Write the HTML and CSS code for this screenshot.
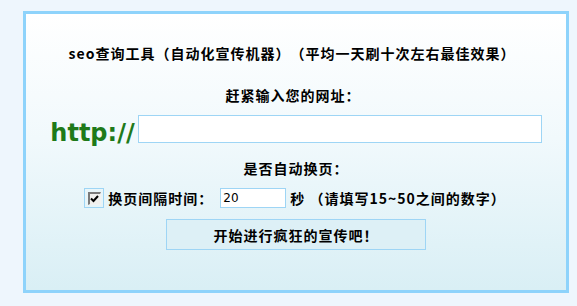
FILE: index.html
```html
<!DOCTYPE html>
<html lang="zh-CN">
<head>
<meta charset="utf-8">
<title>seo查询工具</title>
<link rel="stylesheet" href="styles.css">
</head>
<body>
<div class="panel">
  <div class="title">seo查询工具（自动化宣传机器）（平均一天刷十次左右最佳效果）</div>
  <div class="label label-url">赶紧输入您的网址：</div>
  <div class="url-row">
    <span class="proto">http://</span>
    <input class="url-input" type="text" value="">
  </div>
  <div class="label label-auto">是否自动换页：</div>
  <div class="opt-row">
    <span class="chk-wrap"><span class="chk"><svg width="9" height="8" viewBox="0 0 9 8"><path d="M1 3.5 L3.5 6 L8 1" fill="none" stroke="#000" stroke-width="2"/></svg></span></span>
    <span class="opt-text">换页间隔时间：</span>
    <input class="sec-input" type="text" value="20">
    <span class="opt-text sec">秒 （请填写15~50之间的数字）</span>
  </div>
  <div class="btn">开始进行疯狂的宣传吧！</div>
</div>
</body>
</html>
```

FILE: styles.css
```css
html, body {
  margin: 0;
  padding: 0;
}
body {
  background: #eef6fd;
  width: 577px;
  height: 306px;
  font-family: "Noto Sans CJK SC", "DejaVu Sans", sans-serif;
  color: #000;
}
.panel {
  box-sizing: border-box;
  margin: 11px 0 0 23px;
  width: 546px;
  height: 282px;
  border: 3px solid #8ed3fb;
  background: linear-gradient(#ffffff 0%, #f1f9fc 45%, #d9eff5 100%);
  display: flex;
  flex-direction: column;
  align-items: center;
  padding-top: 29px;
}
.title, .label, .opt-text, .btn {
  font-size: 14px;
  font-weight: bold;
  letter-spacing: 1px;
  line-height: 20px;
  white-space: pre;
  text-spacing-trim: space-all;
}
.title {
  margin-left: -8px;
}
.label-url {
  margin-top: 22px;
  margin-left: -6px;
}
.url-row {
  margin-top: 10px;
  display: flex;
  align-items: flex-end;
  height: 28px;
}
.proto {
  font-family: "DejaVu Sans", sans-serif;
  font-weight: bold;
  font-size: 24px;
  line-height: 28px;
  color: #1e7a1a;
  margin-right: 3px;
  position: relative;
  top: 4px;
}
.url-input {
  box-sizing: border-box;
  width: 404px;
  height: 28px;
  border: 1px solid #9ed5f5;
  background: #fff;
  margin: 0;
  padding: 0 3px;
  outline: none;
}
.label-auto {
  margin-top: 15px;
}
.opt-row {
  margin-top: 10px;
  display: flex;
  align-items: center;
  height: 20px;
  margin-left: -2px;
}
.chk-wrap {
  box-sizing: border-box;
  width: 20px;
  height: 20px;
  border: 1px solid #9ed5f5;
  display: flex;
  align-items: center;
  justify-content: center;
  margin-right: 4px;
}
.chk {
  box-sizing: border-box;
  width: 13px;
  height: 13px;
  border-style: solid;
  border-width: 2px 1px 1px 2px;
  border-color: #7a7a7a #f2f2f2 #f2f2f2 #7a7a7a;
  background: #f0f0ee;
  display: flex;
  align-items: center;
  justify-content: center;
}
.chk svg {
  display: block;
}
.sec-input {
  box-sizing: border-box;
  width: 66px;
  height: 20px;
  border: 1px solid #9ed5f5;
  background: #fff;
  margin: 0 4px 0 7px;
  padding: 0 2px;
  font-family: "DejaVu Sans", sans-serif;
  font-size: 12px;
  color: #000;
  outline: none;
}
.btn {
  box-sizing: border-box;
  margin-top: 11px;
  width: 260px;
  height: 31px;
  border: 1px solid #9ed5f5;
  background: #ddf0f6;
  display: flex;
  align-items: center;
  justify-content: center;
}
```
